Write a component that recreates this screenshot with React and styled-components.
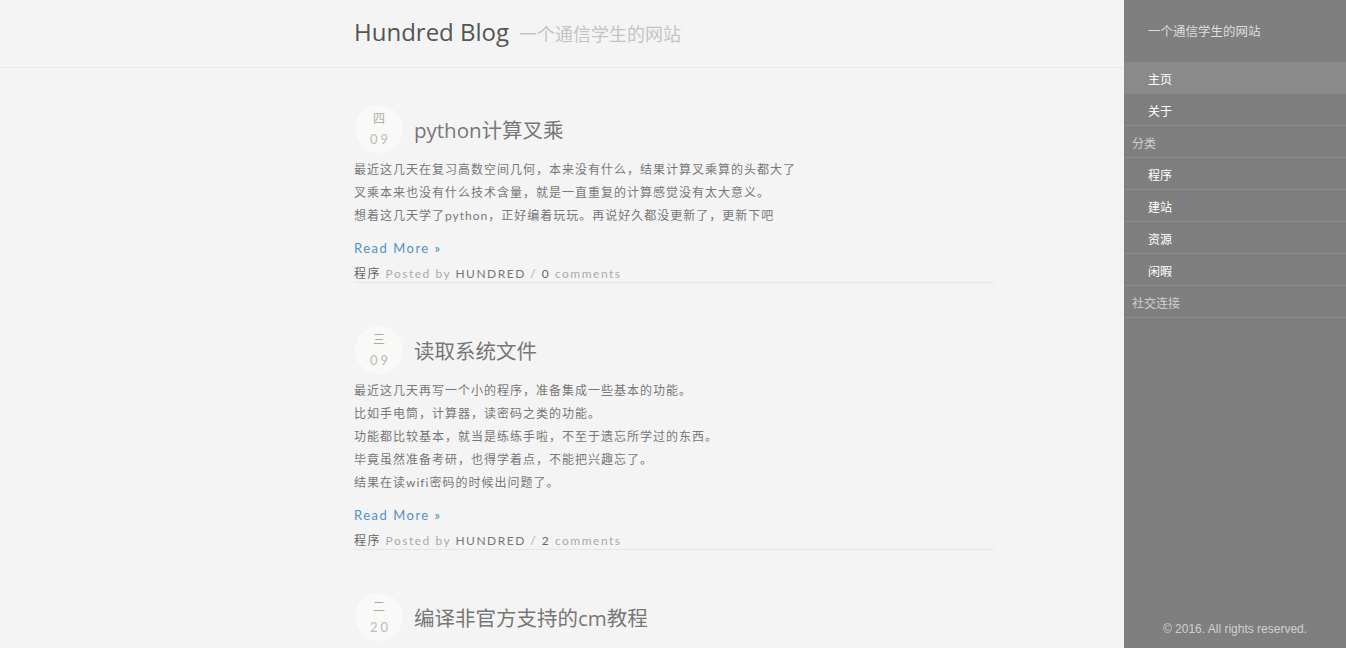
import React from "react";
import styled, { createGlobalStyle } from "styled-components";

const GlobalStyle = createGlobalStyle`
  html, body {
    margin: 0;
    padding: 0;
    height: 100%;
    overflow: hidden;
    background: #f4f4f4;
  }
  body {
    font-family: Lato, "Noto Sans CJK SC", sans-serif;
  }
`;

const Page = styled.div`
  display: flex;
  height: 648px;
`;

const Main = styled.div`
  flex: 1;
  background: #f4f4f4;
  overflow: hidden;
`;

const Header = styled.header`
  height: 68px;
  border-bottom: 1px solid #e9e9e9;
  box-sizing: border-box;
  display: flex;
  align-items: center;
  padding: 0 0 4px 354px;
`;

const Brand = styled.h1`
  margin: 0;
  font-family: "Open Sans", "Noto Sans CJK SC", sans-serif;
  font-weight: 400;
  font-size: 24px;
  color: #555;
  display: flex;
  align-items: baseline;
  gap: 10px;
`;

const Tagline = styled.span`
  font-size: 18px;
  color: #c4c4c4;
  font-family: "Noto Sans CJK SC", sans-serif;
`;

const Content = styled.div`
  width: 640px;
  margin-left: 354px;
  padding-top: 37px;
`;

const Post = styled.article`
  padding-bottom: 1px;
  border-bottom: 1px solid #e6e6e6;
  margin-bottom: 43px;
`;

const PostHead = styled.div`
  display: flex;
  align-items: center;
  gap: 11px;
  margin-bottom: 5px;
`;

const DateBadge = styled.div`
  width: 48px;
  height: 48px;
  border-radius: 50%;
  background: #f9f9f8;
  margin-left: 1px;
  display: flex;
  flex-direction: column;
  align-items: center;
  justify-content: center;
  color: #aaa;
  line-height: 1;
`;

const Weekday = styled.span`
  font-family: "Noto Sans CJK SC", sans-serif;
  font-size: 12px;
  margin: 0 0 9px;
`;

const Day = styled.span`
  font-family: Lato, sans-serif;
  font-size: 13px;
  color: #bbb;
  letter-spacing: 3px;
  margin-right: -3px;
`;

const Title = styled.h2`
  margin: 0;
  font-family: "Open Sans", "Noto Sans CJK SC", sans-serif;
  font-weight: 400;
  font-size: 20.5px;
  color: #777;
`;

const Body = styled.div`
  font-size: 12px;
  line-height: 23px;
  letter-spacing: 1px;
  color: #777;
  font-family: Lato, "Noto Sans CJK SC", sans-serif;
`;

const Line = styled.p`
  margin: 0;
`;

const ReadMore = styled.a`
  display: block;
  margin-top: 11px;
  font-size: 13px;
  letter-spacing: 1.5px;
  color: #5290c3;
  text-decoration: none;
  line-height: 20px;
`;

const Meta = styled.div`
  margin-top: 9px;
  font-size: 12px;
  letter-spacing: 1.5px;
  line-height: 14px;
  color: #aaa;
`;

const MetaStrong = styled.span`
  color: ${(p) => p.$tone || "#777"};
`;

const Sidebar = styled.aside`
  width: 222px;
  background: #7f7f7f;
  display: flex;
  flex-direction: column;
  font-family: "Noto Sans CJK SC", sans-serif;
  font-size: 12px;
`;

const SideTitle = styled.div`
  height: 62px;
  box-sizing: border-box;
  padding: 21px 0 0 24px;
  color: #dedede;
  font-size: 12.5px;
`;

const MenuItem = styled.div`
  height: 32px;
  box-sizing: border-box;
  display: flex;
  align-items: center;
  padding: 1px 0 0 ${(p) => (p.$group ? "8px" : "24px")};
  color: ${(p) => (p.$group ? "#cfcfcf" : "#fff")};
  background: ${(p) => (p.$active ? "#8a8a8a" : "transparent")};
  border-bottom: 1px solid ${(p) => (p.$active ? "#8a8a8a" : "#8c8c8c")};
`;

const SideFooter = styled.div`
  margin-top: auto;
  padding-bottom: 12px;
  text-align: center;
  font-family: "Liberation Sans", Arial, sans-serif;
  font-size: 12px;
  color: #d0d0d0;
`;

const posts = [
  {
    weekday: "四",
    day: "09",
    title: "python计算叉乘",
    lines: [
      "最近这几天在复习高数空间几何，本来没有什么，结果计算叉乘算的头都大了",
      "叉乘本来也没有什么技术含量，就是一直重复的计算感觉没有太大意义。",
      "想着这几天学了python，正好编着玩玩。再说好久都没更新了，更新下吧",
    ],
    comments: 0,
  },
  {
    weekday: "三",
    day: "09",
    title: "读取系统文件",
    lines: [
      "最近这几天再写一个小的程序，准备集成一些基本的功能。",
      "比如手电筒，计算器，读密码之类的功能。",
      "功能都比较基本，就当是练练手啦，不至于遗忘所学过的东西。",
      "毕竟虽然准备考研，也得学着点，不能把兴趣忘了。",
      "结果在读wifi密码的时候出问题了。",
    ],
    comments: 2,
  },
  {
    weekday: "二",
    day: "20",
    title: "编译非官方支持的cm教程",
    lines: [],
    comments: 0,
  },
];

const menu = [
  { label: "主页", active: true },
  { label: "关于" },
  { label: "分类", group: true },
  { label: "程序" },
  { label: "建站" },
  { label: "资源" },
  { label: "闲暇" },
  { label: "社交连接", group: true },
];

function App() {
  return (
    <>
      <GlobalStyle />
      <Page>
        <Main>
          <Header>
            <Brand>
              Hundred Blog <Tagline>一个通信学生的网站</Tagline>
            </Brand>
          </Header>
          <Content>
            {posts.map((post) => (
              <Post key={post.title}>
                <PostHead>
                  <DateBadge>
                    <Weekday>{post.weekday}</Weekday>
                    <Day>{post.day}</Day>
                  </DateBadge>
                  <Title>{post.title}</Title>
                </PostHead>
                <Body>
                  {post.lines.map((l) => (
                    <Line key={l}>{l}</Line>
                  ))}
                </Body>
                <ReadMore href="#">Read More »</ReadMore>
                <Meta>
                  <MetaStrong $tone="#666">程序</MetaStrong> Posted by{" "}
                  <MetaStrong>HUNDRED</MetaStrong> / <MetaStrong $tone="#666">{post.comments}</MetaStrong> comments
                </Meta>
              </Post>
            ))}
          </Content>
        </Main>
        <Sidebar>
          <SideTitle>一个通信学生的网站</SideTitle>
          {menu.map((m) => (
            <MenuItem key={m.label} $active={m.active} $group={m.group}>
              {m.label}
            </MenuItem>
          ))}
          <SideFooter>© 2016. All rights reserved.</SideFooter>
        </Sidebar>
      </Page>
    </>
  );
}

export default App;
